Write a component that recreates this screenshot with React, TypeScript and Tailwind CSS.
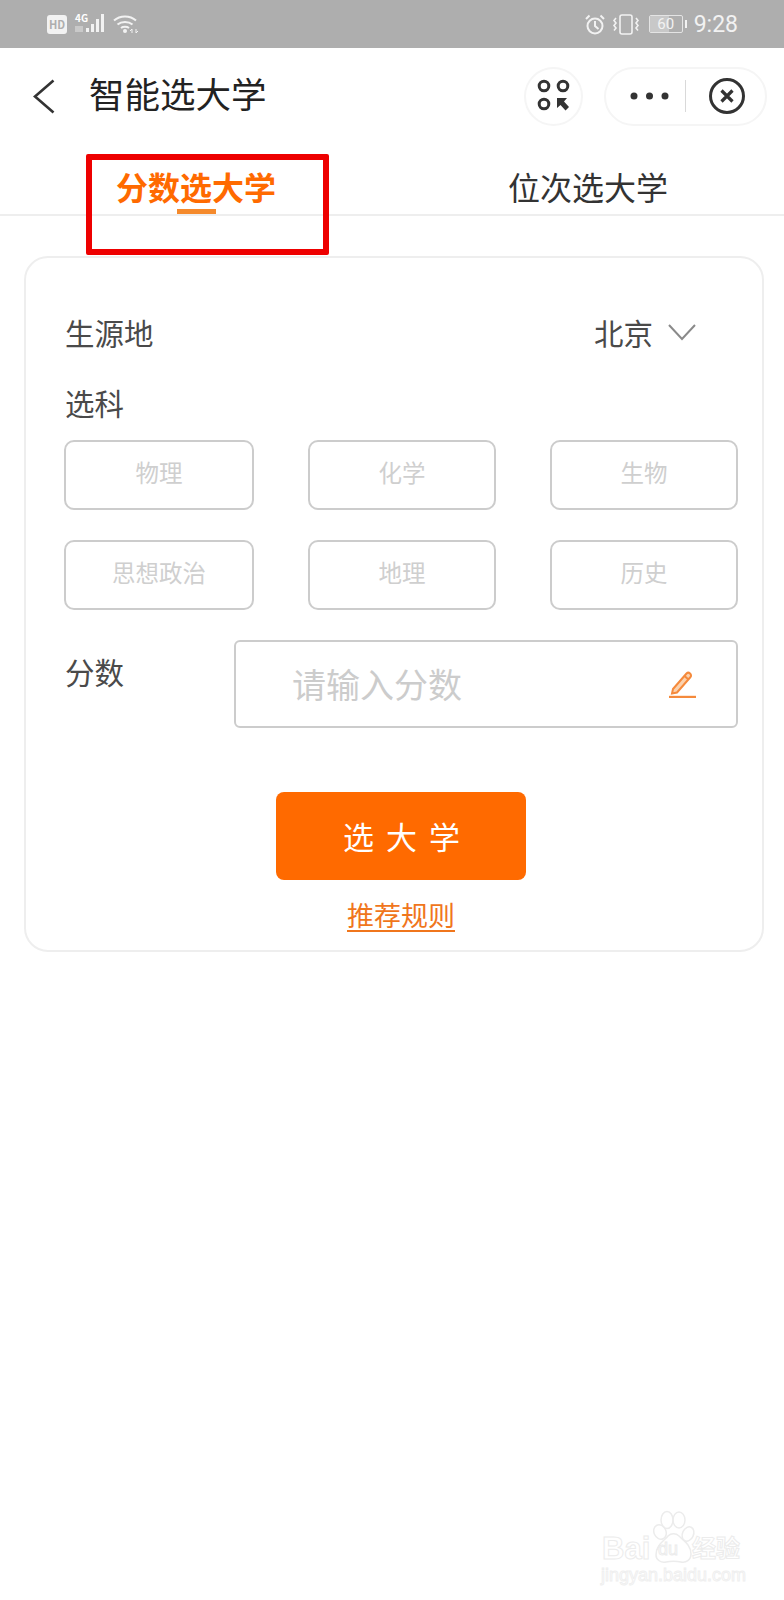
const subjects = ["物理", "化学", "生物", "思想政治", "地理", "历史"];

function StatusBar() {
  return (
    <div className="flex h-12 items-center justify-between bg-[#aeaeae] pl-[47px] pr-[46px] text-white">
      <div className="flex items-center">
        {/* HD badge */}
        <div className="flex h-[19px] w-5 items-center justify-center rounded-[3px] bg-[#f2f2f2] text-[11px] font-bold leading-none text-[#aeaeae]">
          HD
        </div>
        {/* 4G + signal */}
        <div className="relative ml-2 h-5 w-[33px]">
          <span className="absolute left-0 top-[-2px] text-[10px] font-bold leading-[12px]">4G</span>
          <svg className="absolute inset-0" width="33" height="20" viewBox="0 0 33 20" fill="#f2f2f2">
            <rect x="0" y="12" width="8" height="6" fill="#c9c9c9" />
            <rect x="11" y="14" width="3" height="4" />
            <rect x="16" y="10" width="3" height="8" />
            <rect x="21" y="5" width="3" height="13" />
            <rect x="26" y="0" width="3" height="18" />
          </svg>
        </div>
        {/* Wifi */}
        <svg className="ml-[5px]" width="26" height="20" viewBox="0 0 26 20" fill="none" stroke="#f2f2f2" strokeWidth="2">
          <path d="M1 6.500C7 1 17 1 23 6.500" />
          <path d="M4.500 10.500C8.500 7 15.500 7 19.500 10.500" />
          <path d="M8 14c2-1.600 6-1.600 8 0" />
          <circle cx="12" cy="17" r="2" fill="#f2f2f2" stroke="none" />
          <path d="M19 19v-4l-2 2M23 15v4l2-2" strokeWidth="1" />
        </svg>
      </div>
      <div className="flex items-center">
        {/* Alarm */}
        <svg width="20" height="21" viewBox="0 0 20 21" fill="none" stroke="#f2f2f2" strokeWidth="2">
          <circle cx="10" cy="12" r="7.500" />
          <path d="M10 7v5l3.500 3M1 5l3.500-3.500M19 5l-3.500-3.500" />
        </svg>
        {/* Vibrate */}
        <svg className="ml-[7px]" width="28" height="21" viewBox="0 0 28 21" fill="none" stroke="#f2f2f2" strokeWidth="1.600">
          <rect x="8" y="1" width="12" height="19" rx="2" />
          <path d="M4 4 2 6.500 4 9 2 11.500 4 14 2 16.500M24 4l2 2.500L24 9l2 2.500L24 14l2 2.500" />
        </svg>
        {/* Battery */}
        <div className="ml-[9px] flex items-center">
          <div className="relative flex h-[18px] w-[34px] items-center justify-center overflow-hidden rounded-[2px] border border-[#e4e4e4]">
            <div className="absolute inset-y-0 left-0 w-[60%] bg-[#c8c8c8]" />
            <span className="relative font-['Roboto',sans-serif] text-[15px] leading-none text-[#f2f2f2]">60</span>
          </div>
          <div className="ml-[2px] h-2 w-[2px] bg-[#f2f2f2]" />
        </div>
        <span className="ml-[7px] font-['Roboto',sans-serif] text-[23px] leading-none text-[#f2f2f2]">9:28</span>
      </div>
    </div>
  );
}

function NavBar() {
  return (
    <div className="flex h-24 items-center pr-[17px]">
      <svg className="ml-[33px]" width="22" height="35" viewBox="0 0 22 35" fill="none" stroke="#333333" strokeWidth="2.600">
        <path d="M20.500 1.500 2 17.500l18.500 16" />
      </svg>
      <h1 className="mb-[6px] ml-[34px] text-[35.500px] leading-none text-[#222222]">智能选大学</h1>

      <div className="ml-auto flex h-[59px] w-[59px] items-center justify-center rounded-full border-2 border-[#f5f5f5]">
        <svg width="34" height="34" viewBox="0 0 34 34" fill="none" stroke="#333333" strokeWidth="3">
          <circle cx="7" cy="7" r="4.800" />
          <circle cx="26" cy="7" r="4.800" />
          <circle cx="7" cy="25" r="4.800" />
          <path d="M20 19h10l-3 3.500 5 5.500-3.500 3.500-5-5.500-3.500 3Z" fill="#333333" stroke="none" />
        </svg>
      </div>

      <div className="ml-[21px] flex h-[59px] w-[163px] items-center rounded-full border-2 border-[#f5f5f5] pl-[24px]">
        <svg width="40" height="8" viewBox="0 0 40 8" fill="#333333">
          <circle cx="4" cy="4" r="3.500" />
          <circle cx="19.500" cy="4" r="3.500" />
          <circle cx="35" cy="4" r="3.500" />
        </svg>
        <div className="ml-[15px] h-8 w-px bg-[#d9d9d9]" />
        <svg className="ml-[23px]" width="36" height="36" viewBox="0 0 36 36" fill="none" stroke="#333333">
          <circle cx="18" cy="18" r="16.500" strokeWidth="3" />
          <path d="m12.500 12.500 11 11M23.500 12.500l-11 11" strokeWidth="3.200" />
        </svg>
      </div>
    </div>
  );
}

function Tabs() {
  return (
    <div className="grid h-[72px] grid-cols-2 border-b-2 border-[#eeeeee]">
      <div className="flex flex-col items-center pt-[22px]">
        <span className="text-[32px] font-bold leading-10 text-[#ff6a00]">分数选大学</span>
        <div className="mt-[3px] h-[5px] w-[39px] bg-[#f58a2c]" />
      </div>
      <div className="flex flex-col items-center pt-[22px]">
        <span className="text-[32px] leading-10 text-[#333333]">位次选大学</span>
      </div>
    </div>
  );
}

function Watermark() {
  return (
    <div className="pointer-events-none absolute left-[600px] top-[1510px] h-[76px] w-[145px] text-transparent">
      <span className="absolute left-[2px] top-[23px] font-['Liberation_Sans',sans-serif] text-[31px] font-bold leading-[31px] [-webkit-text-stroke:1px_#ececec]">
        Bai
      </span>
      <svg className="absolute left-[50px] top-0" width="46" height="54" viewBox="0 0 46 54" fill="none" stroke="#ececec" strokeWidth="1.500">
        <ellipse cx="10" cy="22" rx="6" ry="7.500" transform="rotate(-25 10 22)" />
        <ellipse cx="17" cy="10" rx="6" ry="8.500" />
        <ellipse cx="29" cy="10" rx="6" ry="8" />
        <ellipse cx="38" cy="24" rx="5.500" ry="7.500" transform="rotate(25 38 24)" />
        <path d="M6 45c0-10 8-14 12-19 3-3 8-3 11 0 5 5 12 9 12 18 0 6-5 9-10 8-5-1-10-1-15 0-5 1-10-2-10-7Z" />
      </svg>
      <span className="absolute left-[58px] top-[29px] font-['Liberation_Sans',sans-serif] text-[18px] leading-[20px] [-webkit-text-stroke:1px_#ececec]">
        du
      </span>
      <span className="absolute left-[92px] top-[22px] text-[24px] font-bold leading-[30px] [-webkit-text-stroke:1px_#ececec]">
        经验
      </span>
      <span className="absolute left-[1px] top-[54px] whitespace-nowrap font-['Liberation_Sans',sans-serif] text-[18px] leading-[22px] [-webkit-text-stroke:1px_#efefef]">
        jingyan.baidu.com
      </span>
    </div>
  );
}

export default function App() {
  return (
    <div className="relative h-[1600px] w-[784px] overflow-hidden bg-white font-['Noto_Sans_CJK_SC','Noto_Sans',sans-serif]">
      <StatusBar />
      <NavBar />
      <Tabs />

      {/* Form card */}
      <div className="ml-6 mt-10 h-[696px] w-[740px] rounded-[24px] border-2 border-[#eeeeee] pl-[38px] pr-[24px] pt-[54px]">
        <div className="flex items-center justify-between pl-px pr-[42px] text-[29.500px] leading-10 text-[#4a4a4a]">
          <span>生源地</span>
          <div className="flex items-center">
            <span>北京</span>
            <svg className="ml-[15px]" width="28" height="17" viewBox="0 0 28 17" fill="none" stroke="#8a8a8a" strokeWidth="2">
              <path d="m1 1 13 14L27 1" />
            </svg>
          </div>
        </div>

        <div className="mt-[30px] pl-px text-[29.500px] leading-10 text-[#4a4a4a]">选科</div>

        <div className="mt-[18px] grid grid-cols-[190px_188px_188px] gap-x-[54px] gap-y-[30px]">
          {subjects.map((s) => (
            <div
              key={s}
              className="flex h-[70px] items-center justify-center rounded-[10px] border-2 border-[#cccccc] pb-1 text-[23.500px] text-[#cfcfcf]"
            >
              {s}
            </div>
          ))}
        </div>

        <div className="mt-[30px] flex items-start">
          <span className="mt-[11px] pl-px text-[29.500px] leading-10 text-[#4a4a4a]">分数</span>
          <div className="ml-auto flex h-[88px] w-[504px] items-center justify-between rounded-[6px] border-2 border-[#cccccc] pl-[56px] pr-[40px]">
            <span className="text-[34px] leading-10 text-[#cccccc]">请输入分数</span>
            <svg width="28" height="28" viewBox="0 0 28 28" fill="#fbd2ae" stroke="#f58a3c" strokeWidth="2">
              <path d="M5 19 18.500 3.500c1-1 2.500-1 3.500 0s1.500 2.500.5 3.500L9 22.500l-5 1Z" />
              <path d="m16.500 6 4 3.500" />
              <path d="M1 27h27" strokeWidth="2.400" />
            </svg>
          </div>
        </div>

        <div className="mt-16 flex flex-col items-center">
          <button className="h-[88px] w-[250px] rounded-[8px] bg-[#ff6a00] pl-[13px] text-[31px] tracking-[12px] text-white">
            选大学
          </button>
          <span className="mt-[19px] border-b-2 border-[#f0761c] text-[27px] leading-[31px] text-[#f0761c]">
            推荐规则
          </span>
        </div>
      </div>

      {/* Annotation box from the screenshot */}
      <div className="absolute left-[86px] top-[154px] h-[101px] w-[243px] rounded-[2px] border-[6px] border-[#ee0000]" />

      <Watermark />
    </div>
  );
}
